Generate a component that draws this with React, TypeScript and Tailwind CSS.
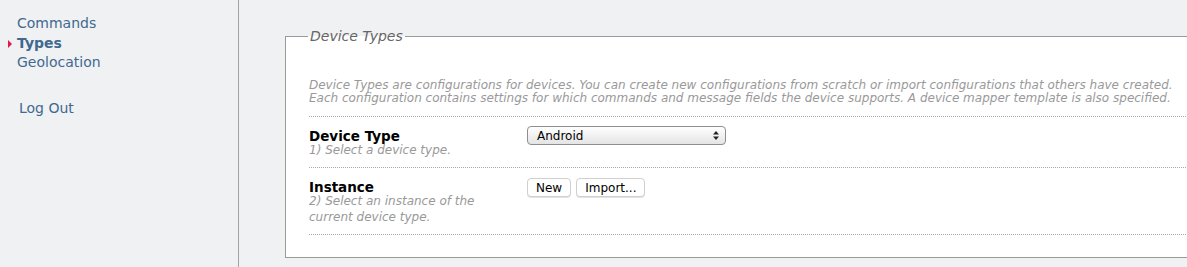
import React from "react";

const navItems = [
  { label: "Commands", active: false },
  { label: "Types", active: true },
  { label: "Geolocation", active: false },
];

const font = { fontFamily: '"DejaVu Sans", Verdana, sans-serif' };

const App = () => {
  return (
    <div
      className="flex h-[267px] w-full overflow-hidden bg-[#f0f1f3]"
      style={font}
    >
      <aside className="w-[239px] shrink-0 border-r border-[#a3a3a3] pt-[14px]">
        <ul className="text-[14px] leading-[19.5px] text-[#3f6990]">
          {navItems.map((item) => (
            <li key={item.label} className="relative pl-[17px]">
              {item.active && (
                <span className="absolute left-[8px] top-[6px] h-0 w-0 border-y-[4px] border-l-[4px] border-y-transparent border-l-[#e5164a]" />
              )}
              <a href="#" className={item.active ? "font-bold" : ""}>
                {item.label}
              </a>
            </li>
          ))}
        </ul>
        <div className="mt-[26px] pl-[19px] text-[14px] leading-[19.5px] text-[#3f6990]">
          <a href="#">Log Out</a>
        </div>
      </aside>

      <main className="min-w-0 flex-1 overflow-hidden pl-[46px] pt-[26px]">
        <fieldset className="w-[940px] border border-[#9a9a9a] bg-white">
          <legend className="ml-[22px] px-[2px] text-[14px] italic text-[#666]">
            Device Types
          </legend>

          <div className="pl-[23px] pt-[32px]">
            <p className="border-b border-dotted border-[#aaa] pb-[11px] text-[12px] italic leading-[13px] text-[#999]">
              Device Types are configurations for devices. You can create new configurations from scratch or import configurations that others have created.
              <br />
              Each configuration contains settings for which commands and message fields the device supports. A device mapper template is also specified.
            </p>

            <div className="flex border-b border-dotted border-[#aaa] pt-[12px] pb-[9px]">
              <div className="w-[218px] shrink-0">
                <div className="text-[13.5px] font-bold leading-[14px] text-black">Device Type</div>
                <div className="text-[12px] italic leading-[15.4px] text-[#999]">1) Select a device type.</div>
              </div>
              <div className="-mt-[3px]">
                <div className="flex h-[19px] w-[199px] items-center justify-between rounded-[4px] border border-[#8e8e8e] bg-gradient-to-b from-white to-[#e4e4e4] pl-[9px] pr-[6px] text-[12px] text-black">
                  <span>Android</span>
                  <svg width="6" height="9" viewBox="0 0 6 9">
                    <path d="M0 3.5 L3 0 L6 3.5 Z" fill="#222" />
                    <path d="M0 5.5 L3 9 L6 5.5 Z" fill="#222" />
                  </svg>
                </div>
              </div>
            </div>

            <div className="flex border-b border-dotted border-[#aaa] pt-[12px] pb-[9px]">
              <div className="w-[218px] shrink-0">
                <div className="text-[13.5px] font-bold leading-[14px] text-black">Instance</div>
                <div className="text-[12px] italic leading-[15.4px] text-[#999]">
                  2) Select an instance of the
                  <br />
                  current device type.
                </div>
              </div>
              <div className="-mt-[2px] flex gap-[5px]">
                <button className="h-[19px] rounded-[4px] border border-[#d0d0d0] bg-white px-[8px] text-[12px] text-black shadow-[0_1px_0_#e3e3e3]">
                  New
                </button>
                <button className="h-[19px] rounded-[4px] border border-[#d0d0d0] bg-white px-[8px] text-[12px] text-black shadow-[0_1px_0_#e3e3e3]">
                  Import...
                </button>
              </div>
            </div>

            <div className="h-[22px]" />
          </div>
        </fieldset>
      </main>
    </div>
  );
};

export default App;
